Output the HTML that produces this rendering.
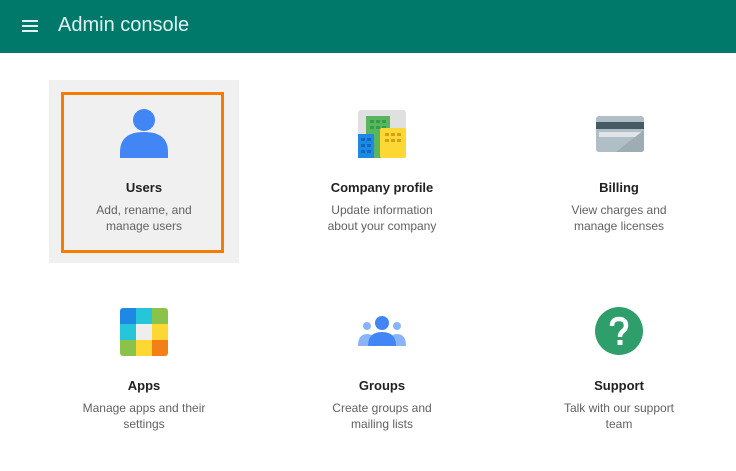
<!DOCTYPE html>
<html><head><style>
body{margin:0;width:736px;height:471px;background:#fff;font-family:"Liberation Sans",sans-serif;position:relative;overflow:hidden}
.hdr{position:absolute;left:0;top:0;width:736px;height:53px;background:#00796b}
.hdr .t{position:absolute;left:58px;top:14px;font-size:20px;color:#e0f2f1}
.hb{position:absolute;left:22px;width:16px;height:2px;background:#e0f2f1}
.tile{position:absolute;width:190px;text-align:center}
.ti{font-size:13px;color:#212121;font-weight:bold;position:absolute;width:190px;left:0}
.de{font-size:12px;color:#616161;line-height:16px;position:absolute;width:190px;left:0}
svg{position:absolute}
</style></head><body>
<div class="hdr"><div class="hb" style="top:20px"></div><div class="hb" style="top:25px"></div><div class="hb" style="top:30px"></div><div class="t">Admin console</div></div>
<div style="position:absolute;left:49px;top:80px;width:190px;height:183px;background:#f0f0f0"></div>
<div style="position:absolute;left:61px;top:92px;width:157px;height:155px;border:3px solid #f57c00"></div>

<svg style="left:120px;top:108px" width="48" height="50"><circle cx="24" cy="12" r="11" fill="#4285f4"/><path d="M0 50 L0 44 Q0 24 24 24 Q48 24 48 44 L48 50Z" fill="#4285f4"/></svg>
<div class="tile" style="left:49px;top:0"><div class="ti" style="top:180px">Users</div><div class="de" style="top:202px">Add, rename, and<br>manage users</div></div>

<svg style="left:358px;top:110px" width="48" height="48"><rect width="48" height="48" rx="3" fill="#e0e0e0"/><rect x="8" y="6" width="24" height="42" fill="#4caf50" opacity=".9"/><g fill="#2e9e48"><rect x="12" y="10" width="4" height="3"/><rect x="18" y="10" width="4" height="3"/><rect x="24" y="10" width="4" height="3"/><rect x="12" y="16" width="4" height="3"/><rect x="18" y="16" width="4" height="3"/><rect x="24" y="16" width="4" height="3"/></g><rect x="0" y="24" width="16" height="24" fill="#1e88e5"/><rect x="22" y="18" width="26" height="30" rx="2" fill="#fdd835"/><g fill="#d4a017"><rect x="27" y="23" width="4" height="3"/><rect x="33" y="23" width="4" height="3"/><rect x="39" y="23" width="4" height="3"/><rect x="27" y="29" width="4" height="3"/><rect x="33" y="29" width="4" height="3"/><rect x="39" y="29" width="4" height="3"/></g><g fill="#1565c0"><rect x="3" y="28" width="4" height="3"/><rect x="9" y="28" width="4" height="3"/><rect x="3" y="34" width="4" height="3"/><rect x="9" y="34" width="4" height="3"/><rect x="3" y="40" width="4" height="3"/><rect x="9" y="40" width="4" height="3"/></g></svg>
<div class="tile" style="left:287px;top:0"><div class="ti" style="top:180px">Company profile</div><div class="de" style="top:202px">Update information<br>about your company</div></div>

<svg style="left:596px;top:116px" width="48" height="36"><rect width="48" height="36" rx="3" fill="#b0bec5"/><rect y="6" width="48" height="7" fill="#455a64"/><rect x="3" y="16" width="42" height="5" fill="#e0e4e6"/><path d="M20 36 L48 14 L48 33 Q48 36 45 36Z" fill="#9eacb3"/></svg>
<div class="tile" style="left:524px;top:0"><div class="ti" style="top:180px">Billing</div><div class="de" style="top:202px">View charges and<br>manage licenses</div></div>

<svg style="left:120px;top:308px" width="48" height="48"><defs><clipPath id="c"><rect width="48" height="48" rx="3"/></clipPath></defs><g clip-path="url(#c)"><rect x="0" y="0" width="16" height="16" fill="#1e88e5"/><rect x="16" y="0" width="16" height="16" fill="#26c6da"/><rect x="32" y="0" width="16" height="16" fill="#8bc34a"/><rect x="0" y="16" width="16" height="16" fill="#26c6da"/><rect x="16" y="16" width="16" height="16" fill="#eeeeee"/><rect x="32" y="16" width="16" height="16" fill="#fdd835"/><rect x="0" y="32" width="16" height="16" fill="#8bc34a"/><rect x="16" y="32" width="16" height="16" fill="#fdd835"/><rect x="32" y="32" width="16" height="16" fill="#f57f17"/></g></svg>
<div class="tile" style="left:49px;top:0"><div class="ti" style="top:378px">Apps</div><div class="de" style="top:400px">Manage apps and their<br>settings</div></div>

<svg style="left:358px;top:316px" width="48" height="30"><circle cx="9" cy="10" r="4" fill="#8ab4f8"/><circle cx="39" cy="10" r="4" fill="#8ab4f8"/><path d="M0 30 Q0 18 9 18 Q18 18 18 30Z M30 30 Q30 18 39 18 Q48 18 48 30Z" fill="#8ab4f8"/><circle cx="24" cy="7" r="7" fill="#4285f4"/><path d="M10 30 Q10 16 24 16 Q38 16 38 30Z" fill="#4285f4"/></svg>
<div class="tile" style="left:287px;top:0"><div class="ti" style="top:378px">Groups</div><div class="de" style="top:400px">Create groups and<br>mailing lists</div></div>

<svg style="left:595px;top:307px" width="48" height="48"><circle cx="24" cy="24" r="24" fill="#2e9e6a"/><path d="M17 19 Q17 12 24 12 Q31 12 31 18.5 Q31 22 27.5 24.5 Q25 26.5 25 30" stroke="#fff" stroke-width="4.5" fill="none"/><rect x="22.5" y="33" width="5" height="5" fill="#fff"/></svg>
<div class="tile" style="left:524px;top:0"><div class="ti" style="top:378px">Support</div><div class="de" style="top:400px">Talk with our support<br>team</div></div>
</body></html>
